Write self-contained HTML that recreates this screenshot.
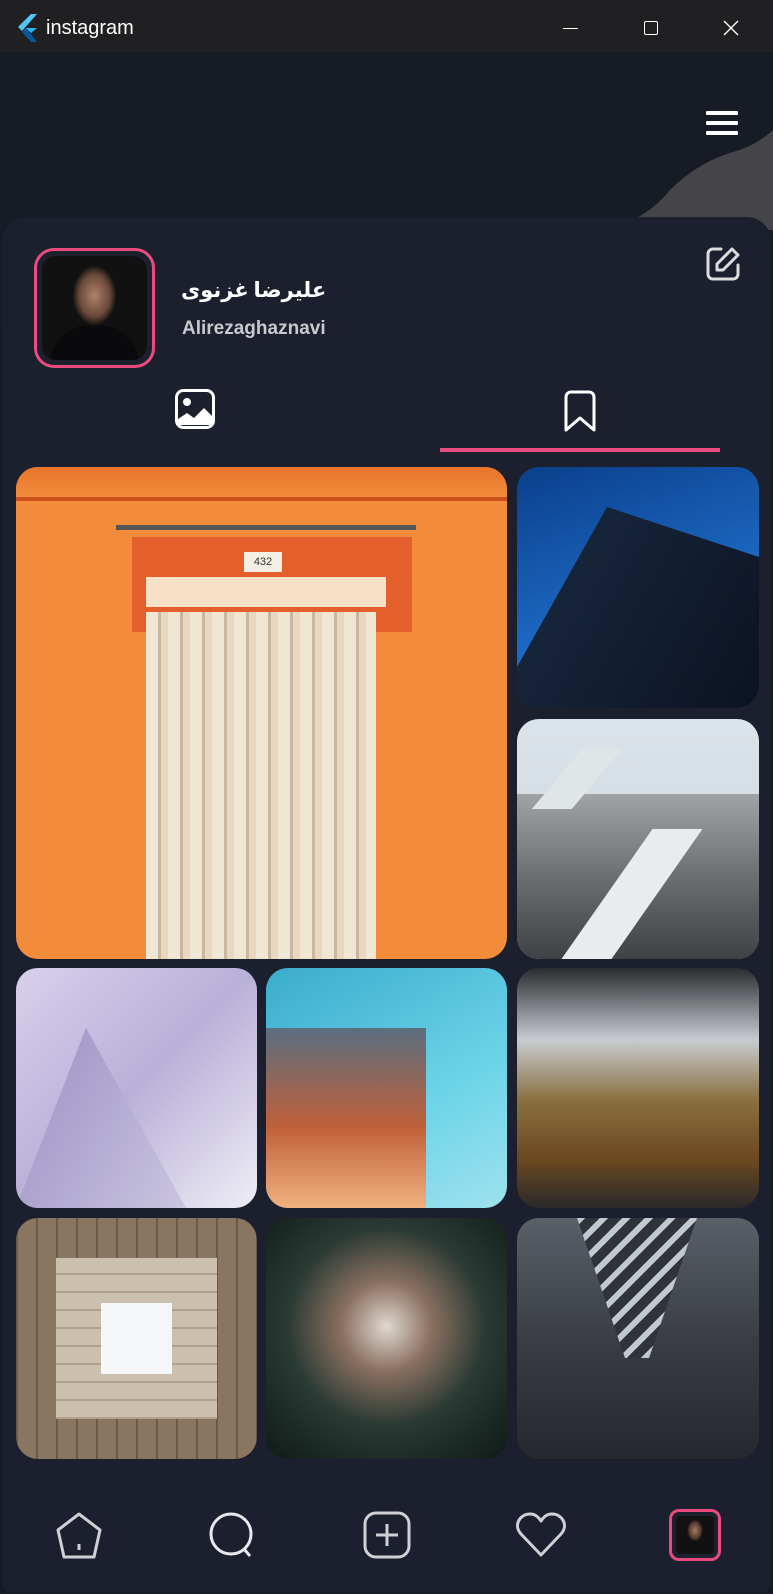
<!DOCTYPE html>
<html><head><meta charset="utf-8"><style>
*{margin:0;padding:0;box-sizing:border-box}
body{width:773px;height:1594px;background:#161a24;font-family:"Liberation Sans","Noto Sans CJK SC",sans-serif;position:relative;overflow:hidden}
.tb{position:absolute;left:0;top:0;width:773px;height:52px;background:#201f22}
.hdr{position:absolute;left:0;top:52px;width:773px;height:280px;background:#171b26}
.panel{position:absolute;left:2px;top:217px;width:769px;height:1375px;background:#1c1f2e;border-radius:24px 24px 8px 8px}
.c{position:absolute;border-radius:22px;overflow:hidden}
.abs{position:absolute}
</style></head><body>
<div class="tb"></div>
<svg class="abs" style="left:16px;top:14px" width="24" height="28" viewBox="0 0 24 28"><path d="M15 0L2 13l4 4L21 0z" fill="#54c5f8"/><path d="M10 14l-4 4 9 10h6z" fill="#01579b"/><path d="M10 14l5 5 6-5h-6z" fill="#29b6f6"/></svg>
<div class="abs" style="left:46px;top:17px;color:#fff;font-size:20px">instagram</div>
<div class="abs" style="left:563px;top:28px;width:15px;height:1px;background:#fff"></div>
<div class="abs" style="left:644px;top:21px;width:14px;height:14px;border:1.5px solid #fff;border-radius:2px"></div>
<svg class="abs" style="left:723px;top:20px" width="16" height="16"><path d="M1 1L15 15M15 1L1 15" stroke="#fff" stroke-width="1.4"/></svg>
<div class="hdr"></div>
<svg class="abs" style="left:600px;top:130px" width="173" height="100"><path d="M20 95 Q50 85 70 60 Q100 30 140 20 Q160 12 173 0 L173 100 L0 100Z" fill="#5a5758" opacity=".7"/></svg>
<div class="abs" style="left:706px;top:111px;width:32px;height:4px;background:#fff;border-radius:1px;box-shadow:0 10px 0 #fff,0 20px 0 #fff"></div>
<div class="panel"></div>
<div class="abs" style="left:34px;top:248px;width:121px;height:120px;border:3px solid #e94b7e;border-radius:20px;padding:5px"><div style="width:100%;height:100%;border-radius:14px;background:radial-gradient(ellipse 22px 30px at 50% 38%,#b0826b,#6a4838 70%,#111 100%),#111;position:relative;overflow:hidden"><div style="position:absolute;left:8px;right:8px;bottom:-10px;height:45px;background:#0a0a0c;border-radius:40px 40px 0 0"></div></div></div>
<div class="abs" style="left:181px;top:274px;color:#fff;font-size:21px;font-weight:bold;font-family:'Noto Sans CJK SC','DejaVu Sans',sans-serif">عليرضا غزنوی</div>
<div class="abs" style="left:182px;top:318px;color:#c9c9ce;font-size:19px;font-weight:bold">Alirezaghaznavi</div>
<svg class="abs" style="left:704px;top:245px" width="38" height="38" viewBox="0 0 38 38"><path d="M17 4H9a5 5 0 0 0-5 5v20a5 5 0 0 0 5 5h20a5 5 0 0 0 5-5v-9" fill="none" stroke="#ddd" stroke-width="3" stroke-linecap="round"/><path d="M28 4l6 6-15 15h-6v-6z" fill="none" stroke="#ddd" stroke-width="3" stroke-linejoin="round"/></svg>
<svg class="abs" style="left:175px;top:389px" width="40" height="40" viewBox="0 0 40 40"><rect x="1.5" y="1.5" width="37" height="37" rx="7" fill="none" stroke="#fff" stroke-width="3"/><circle cx="12" cy="13" r="4" fill="#fff"/><path d="M3 36V30l9-6 7 5 10-10 8 8v9z" fill="#fff"/></svg>
<svg class="abs" style="left:562px;top:390px" width="36" height="42" viewBox="0 0 36 42"><path d="M4 40V7a5 5 0 0 1 5-5h18a5 5 0 0 1 5 5v33l-14-12z" fill="none" stroke="#fff" stroke-width="3" stroke-linejoin="round"/></svg>
<div class="abs" style="left:440px;top:448px;width:280px;height:4px;background:#e94b7e"></div>

<div class="c" style="left:16px;top:467px;width:491px;height:492px;background:#f28c3a">
 <div class="abs" style="left:0;top:0;width:100%;height:30px;background:linear-gradient(#e8742a,#f28c3a)"></div>
 <div class="abs" style="left:0;top:30px;width:100%;height:4px;background:#c9521f"></div>
 <div class="abs" style="left:116px;top:70px;width:280px;height:95px;background:#e45f2c"></div>
 <div class="abs" style="left:130px;top:110px;width:240px;height:30px;background:#f6e0c8"></div>
 <div class="abs" style="left:130px;top:145px;width:230px;height:350px;background:repeating-linear-gradient(90deg,#f0e6d4 0 12px,#c9b8a0 12px 15px,#e8d8c0 15px 22px)"></div>
 <div class="abs" style="left:100px;top:58px;width:300px;height:5px;background:#555"></div>
 <div class="abs" style="left:228px;top:85px;width:38px;height:20px;background:#f4efe4;font-size:11px;text-align:center;line-height:20px;color:#333">432</div>
</div>
<div class="c" style="left:517px;top:467px;width:242px;height:241px;background:linear-gradient(160deg,#0b3f8a,#1d6bc6 60%,#2a7ad4)"><div class="abs" style="left:0;top:40px;width:242px;height:201px;background:linear-gradient(120deg,#1a2a42,#0b1322);clip-path:polygon(0 160px,90px 0,242px 50px,242px 201px,0 201px)"></div></div>
<div class="c" style="left:517px;top:719px;width:242px;height:240px;background:linear-gradient(#dbe4ea,#c9d2d8)"><div class="abs" style="left:0;top:75px;width:242px;height:165px;background:linear-gradient(#a0a4a6,#6b6f70 50%,#3f4244)"></div><div class="abs" style="left:90px;top:110px;width:50px;height:130px;background:#e8ecee;transform:skewX(-35deg)"></div><div class="abs" style="left:40px;top:30px;width:40px;height:60px;background:#e0e5e8;transform:skewX(-40deg)"></div></div>
<div class="c" style="left:16px;top:968px;width:241px;height:240px;background:linear-gradient(135deg,#d8d0ec,#b9b0d8 50%,#efedf5)"><div class="abs" style="left:0;top:60px;width:241px;height:180px;background:linear-gradient(120deg,#9a8fc4,#d6d2e6);clip-path:polygon(70px 0,170px 180px,0 180px)"></div></div>
<div class="c" style="left:266px;top:968px;width:241px;height:240px;background:linear-gradient(150deg,#3aaccc,#6cd4e8 60%,#9ee2ee)"><div class="abs" style="left:0;top:60px;width:160px;height:180px;background:linear-gradient(#5a6e80,#c0603a 55%,#f0b080)"></div></div>
<div class="c" style="left:517px;top:968px;width:242px;height:240px;background:linear-gradient(#2a2c30,#c8ccd0 30%,#8a7040 55%,#6b4820 80%,#2a2a2a)"></div>
<div class="c" style="left:16px;top:1218px;width:241px;height:241px;background:repeating-linear-gradient(90deg,#6b5a48 0 2px,#8a7560 2px 20px),#7a6654"><div class="abs" style="left:40px;top:40px;width:161px;height:161px;background:repeating-linear-gradient(0deg,#b0a090 0 2px,#cbbfae 2px 18px)"></div><div class="abs" style="left:85px;top:85px;width:71px;height:71px;background:#f4f6fa"></div></div>
<div class="c" style="left:266px;top:1218px;width:241px;height:241px;background:radial-gradient(circle at 50% 45%,#e0d8d0 0,#8a7060 25%,#2a3a34 55%,#0e1a16)"></div>
<div class="c" style="left:517px;top:1218px;width:242px;height:241px;background:linear-gradient(#5a6068,#3a3e44 50%,#25282c)"><div class="abs" style="left:60px;top:0;width:120px;height:140px;background:repeating-linear-gradient(135deg,#c0c8d0 0 6px,#30343a 6px 16px);clip-path:polygon(0 0,100% 0,60% 100%,40% 100%)"></div></div>

<svg class="abs" style="left:54px;top:1511px" width="50" height="50" viewBox="0 0 50 50"><path d="M25 3L4 19l6 27h30l6-27z" fill="none" stroke="#cfcfd4" stroke-width="3" stroke-linejoin="round"/><path d="M25 33v6" stroke="#cfcfd4" stroke-width="3"/></svg>
<svg class="abs" style="left:208px;top:1511px" width="50" height="50" viewBox="0 0 50 50"><circle cx="23" cy="23" r="20" fill="none" stroke="#e8e8ec" stroke-width="3"/><path d="M36 38l6 7" stroke="#e8e8ec" stroke-width="3"/></svg>
<svg class="abs" style="left:363px;top:1511px" width="48" height="48" viewBox="0 0 48 48"><rect x="2" y="2" width="44" height="44" rx="11" fill="none" stroke="#cfcfd4" stroke-width="3"/><path d="M24 13v22M13 24h22" stroke="#cfcfd4" stroke-width="3"/></svg>
<svg class="abs" style="left:515px;top:1512px" width="52" height="46" viewBox="0 0 52 46"><path d="M26 43L6 22C-2 13 5 2 15 2c6 0 9 4 11 7 2-3 5-7 11-7 10 0 17 11 9 20z" fill="none" stroke="#cfcfd4" stroke-width="3" stroke-linejoin="round"/></svg>
<div class="abs" style="left:669px;top:1509px;width:52px;height:52px;border:3px solid #e94b7e;border-radius:10px;padding:4px"><div style="width:100%;height:100%;border-radius:4px;background:radial-gradient(ellipse 8px 11px at 50% 38%,#a47a64,#5a3c30 70%,#111 100%),#111"></div></div>
</body></html>
